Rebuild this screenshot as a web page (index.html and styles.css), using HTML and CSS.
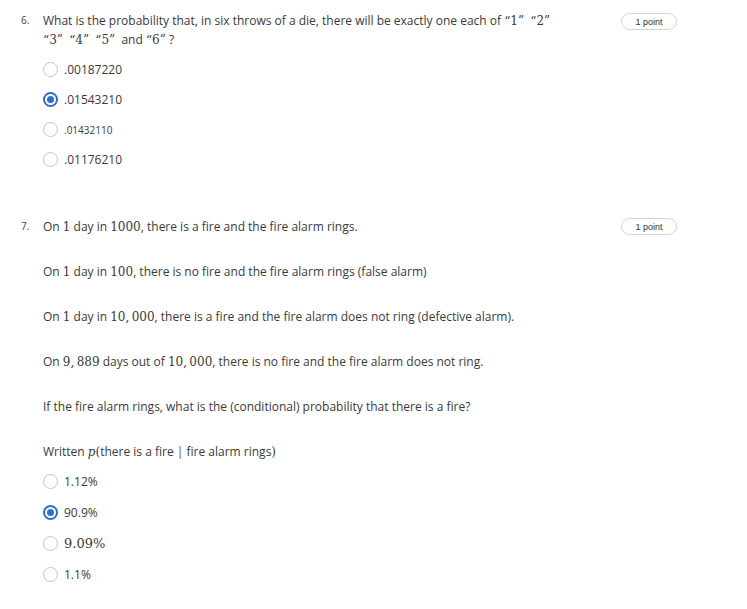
FILE: index.html
```html
<!DOCTYPE html>
<html>
<head>
<meta charset="utf-8">
<link rel="stylesheet" href="styles.css">
</head>
<body>
<div class="page">
  <div class="question q6">
    <div class="num">6.</div>
    <div class="body">
      <div class="prompt">What is the probability that, in six throws of a die, there will be exactly one each of <span class="m">“1”</span>&nbsp; <span class="m">“2”</span><br><span class="m">“3”</span>&nbsp; <span class="m">“4”</span>&nbsp; <span class="m">“5”</span>&nbsp; and <span class="m">“6”</span> ?</div>
      <div class="options first">
        <div class="opt"><span class="radio"></span><span class="label">.00187220</span></div>
        <div class="opt"><span class="radio on"></span><span class="label">.01543210</span></div>
        <div class="opt"><span class="radio"></span><span class="label small">.01432110</span></div>
        <div class="opt"><span class="radio"></span><span class="label">.01176210</span></div>
      </div>
    </div>
    <div class="pts">1 point</div>
  </div>

  <div class="question q7">
    <div class="num">7.</div>
    <div class="body">
      <p class="para">On <span class="m">1</span> day in <span class="m">1000</span>, there is a fire and the fire alarm rings.</p>
      <p class="para">On <span class="m">1</span> day in <span class="m">100</span>, there is no fire and the fire alarm rings (false alarm)</p>
      <p class="para">On <span class="m">1</span> day in <span class="m">10,&thinsp;000</span>, there is a fire and the fire alarm does not ring (defective alarm).</p>
      <p class="para">On <span class="m">9,&thinsp;889</span> days out of <span class="m">10,&thinsp;000</span>, there is no fire and the fire alarm does not ring.</p>
      <p class="para">If the fire alarm rings, what is the (conditional) probability that there is a fire?</p>
      <p class="para">Written <span class="m i">p</span><span class="m">(</span>there is a fire <span class="bar">|</span> fire alarm rings<span class="m">)</span></p>
      <div class="options second">
        <div class="opt"><span class="radio"></span><span class="label">1.12%</span></div>
        <div class="opt"><span class="radio on"></span><span class="label">90.9%</span></div>
        <div class="opt"><span class="radio"></span><span class="label m big">9.09%</span></div>
        <div class="opt"><span class="radio"></span><span class="label">1.1%</span></div>
      </div>
    </div>
    <div class="pts">1 point</div>
  </div>
</div>
</body>
</html>
```

FILE: styles.css
```css
* { box-sizing: border-box; }
html, body { margin: 0; padding: 0; background: #fff; }
body {
  font-family: "Open Sans", "DejaVu Sans", sans-serif;
  font-size: 12px;
  color: #3a3a3a;
}
.page { padding: 11px 0 0 0; width: 747px; }
.question {
  display: flex;
  align-items: flex-start;
}
.num {
  width: 43px;
  padding-left: 21px;
  font-size: 10px;
  line-height: 17px;
  color: #444;
}
.q6 .num { line-height: 19px; }
.body { flex: 1; }
.prompt { line-height: 19px; }
.m { font-family: "DejaVu Serif", "Liberation Serif", serif; font-size: 12px; line-height: 1; }
.i { font-style: italic; }
.pts {
  width: 56px;
  height: 17px;
  margin: 0 70px 0 20px;
  border: 1px solid #d4d4d4;
  border-radius: 9px;
  font-family: "Liberation Sans", Arial, sans-serif;
  font-size: 9px;
  color: #333;
  display: flex;
  align-items: center;
  justify-content: center;
  flex-shrink: 0;
}
.q6 .pts { margin-top: 2px; }
.options { display: flex; flex-direction: column; }
.options.first { margin-top: 12px; gap: 13px; }
.opt { display: flex; align-items: center; height: 17px; }
.radio {
  width: 15px; height: 15px;
  border: 1.5px solid #c4c4c4;
  border-radius: 50%;
  margin-right: 6px;
  position: relative;
  flex-shrink: 0;
}
.radio.on { border: 2px solid #2c6fcf; }
.radio.on::after {
  content: "";
  position: absolute;
  left: 2px; top: 2px;
  width: 7px; height: 7px;
  border-radius: 50%;
  background: #2c6fcf;
}
.label.small { font-size: 10px; }
.label.big { font-size: 13px; }
.q7 { margin-top: 50px; }
.para { margin: 0 0 28px 0; line-height: 17px; height: 17px; }
.options.second { margin-top: -15px; gap: 14px; }
.bar { color: #555; }
```
